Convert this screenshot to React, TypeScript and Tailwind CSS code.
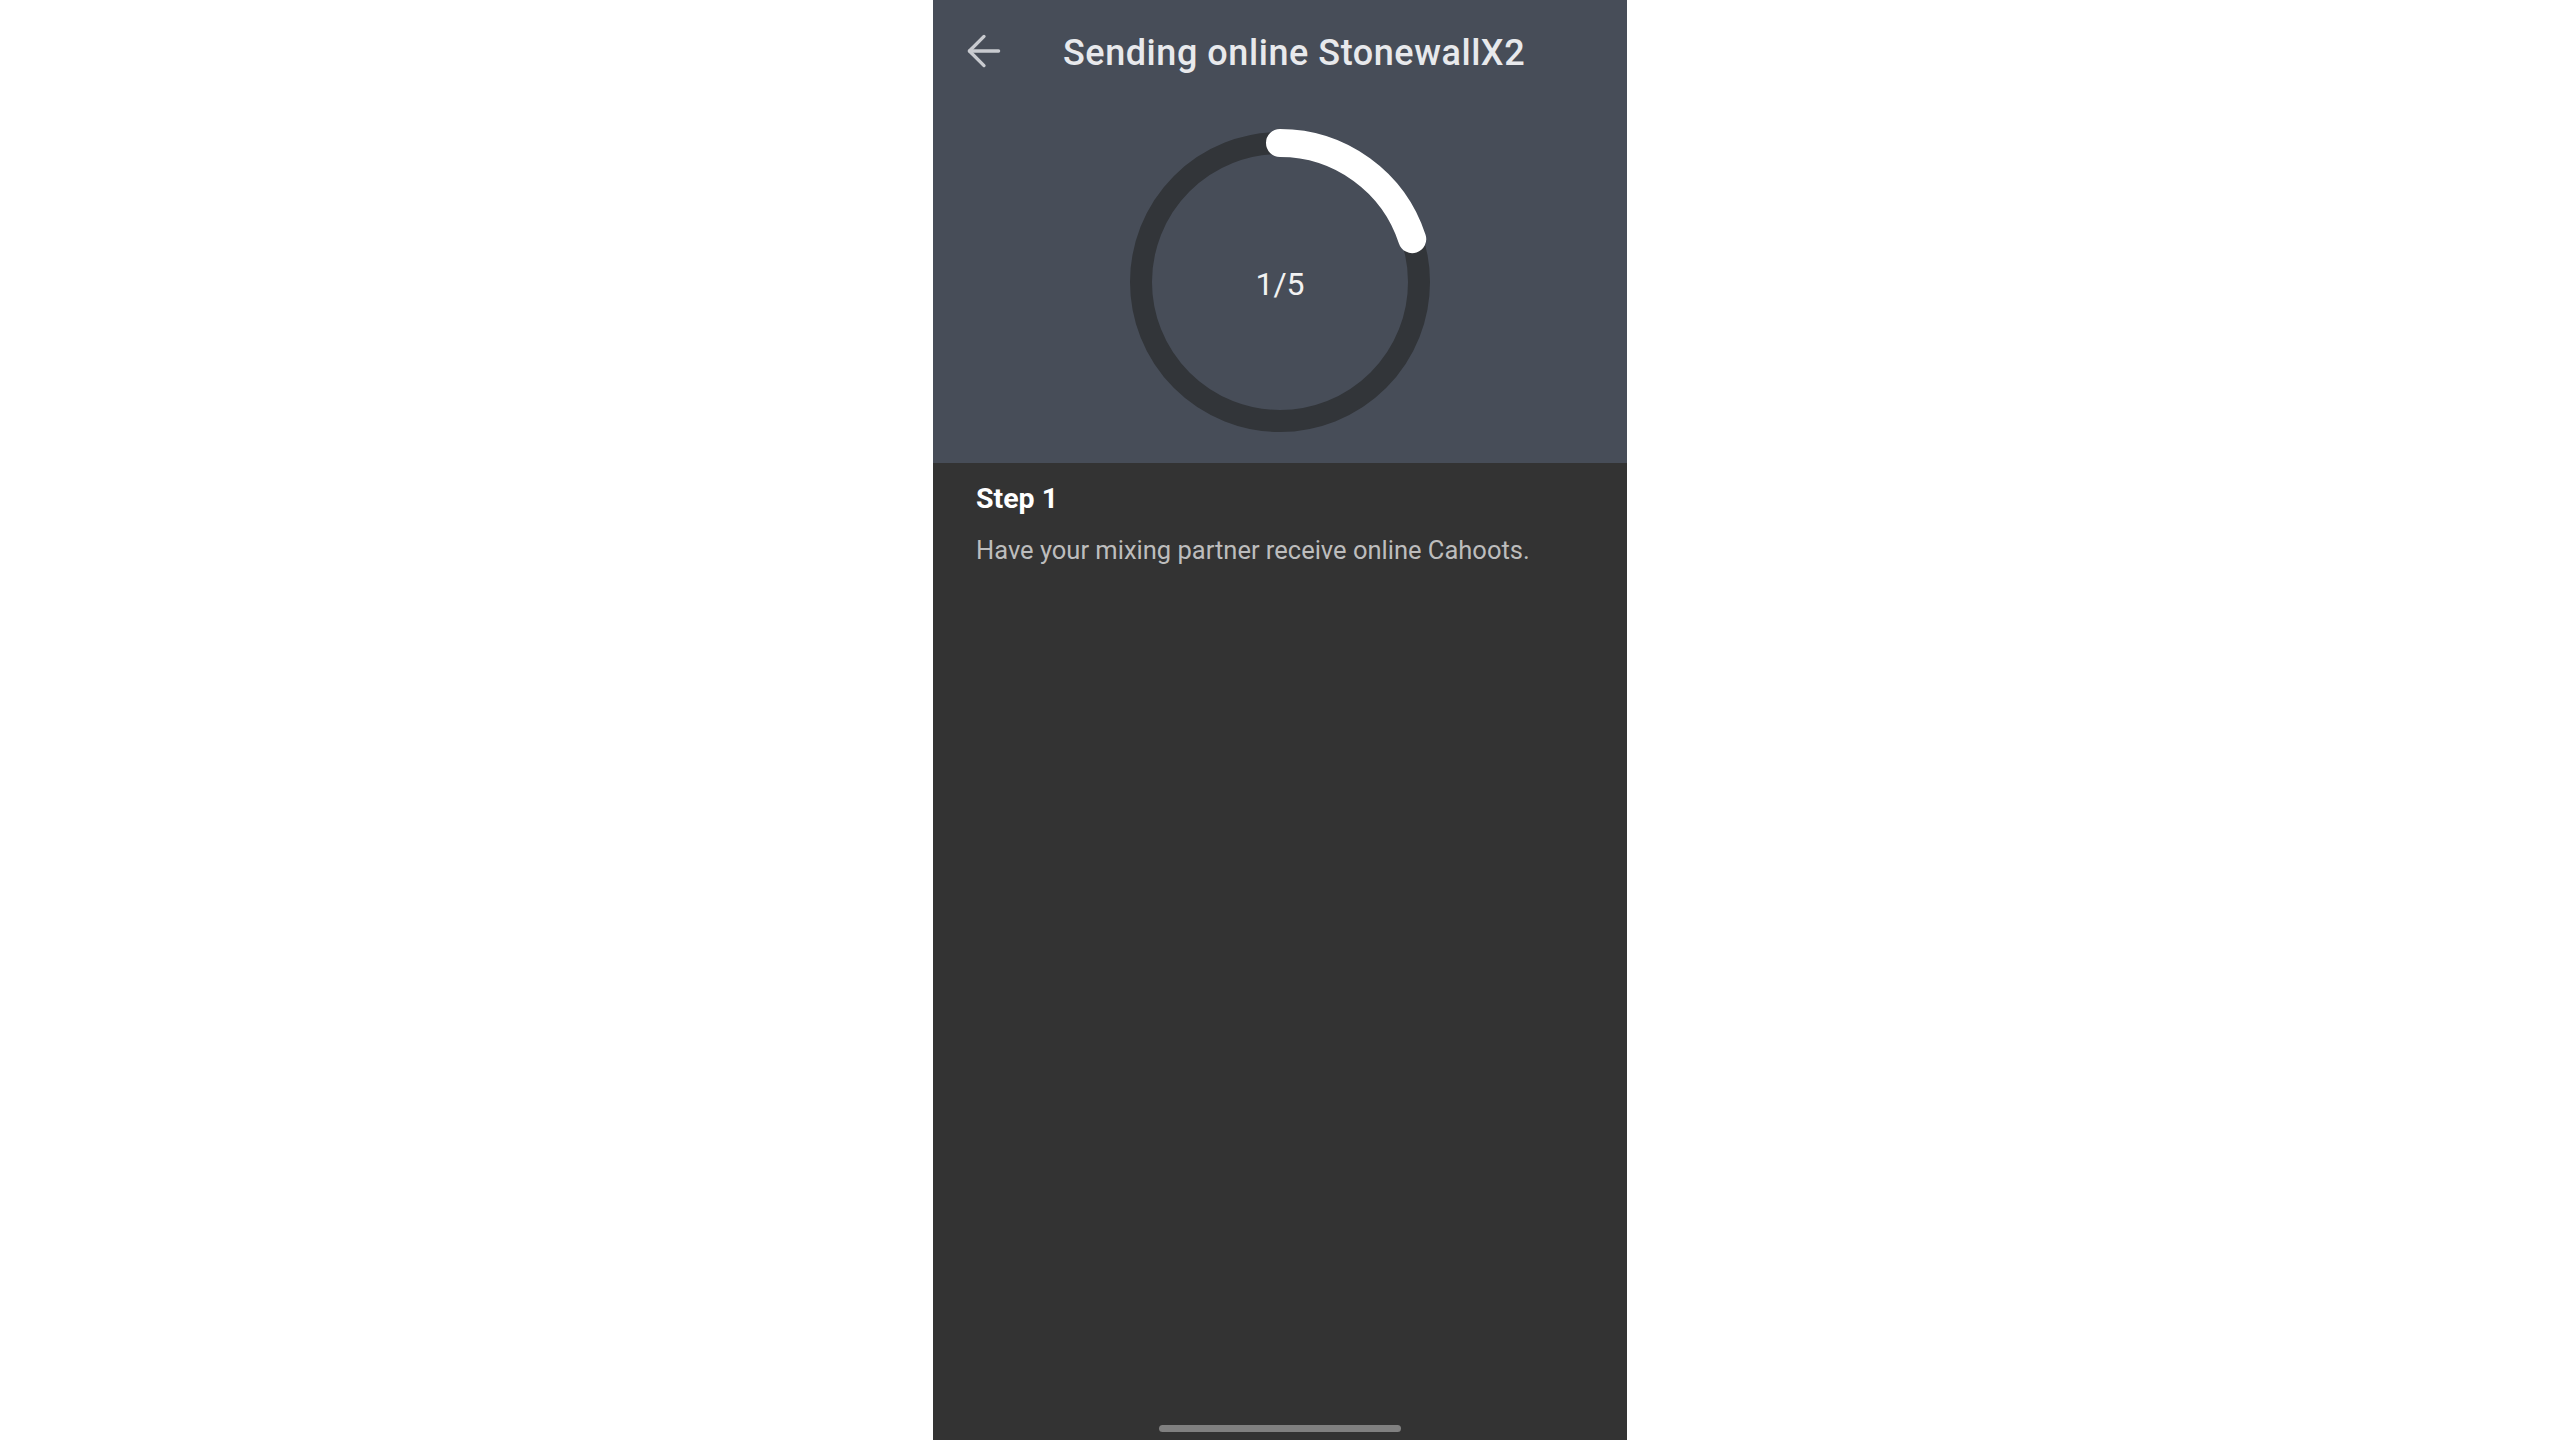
import { ArrowLeft } from "lucide-react";

function ProgressRing({ step, total }: { step: number; total: number }) {
  const r = 139;
  const c = 2 * Math.PI * r;
  const done = c * (step / total);
  return (
    <div className="relative w-[310px] h-[310px]">
      <svg width="310" height="310" viewBox="0 0 310 310" className="-rotate-90">
        <circle cx="155" cy="155" r={r} fill="none" stroke="#323539" strokeWidth="22" />
        <circle
          cx="155"
          cy="155"
          r={r}
          fill="none"
          stroke="#ffffff"
          strokeWidth="28"
          strokeLinecap="round"
          strokeDasharray={`${done} ${c}`}
        />
      </svg>
      <div className="absolute inset-0 flex items-center justify-center pt-[4px] text-[32px] text-[#f2f2f2]">
        {step}/{total}
      </div>
    </div>
  );
}

export default function App() {
  return (
    <div className="h-screen w-full bg-white flex justify-center" style={{ fontFamily: "Roboto, 'Liberation Sans', sans-serif" }}>
      <div className="w-[694px] h-full flex flex-col bg-[#333333]">
        <header className="h-[463px] bg-[#474d58] flex flex-col items-center">
          <div className="w-full h-[102px] flex items-center pl-[26px]">
            <ArrowLeft className="w-[50px] h-[50px] text-[#c9cbd0]" strokeWidth={1.6} />
            <h1 className="ml-[54px] pt-[3px] text-[36px] font-medium text-[#e8e9ec] tracking-[0.55px]">
              Sending online StonewallX2
            </h1>
          </div>
          <div className="mt-[25px]">
            <ProgressRing step={1} total={5} />
          </div>
        </header>
        <section className="flex-1 flex flex-col px-[43px] pt-[18px] relative">
          <p className="text-[28.5px] leading-[36px] font-bold text-white">Step 1</p>
          <p className="mt-[15px] text-[25.5px] leading-[36px] text-[#bdbdbd]">
            Have your mixing partner receive online Cahoots.
          </p>
          <div className="absolute bottom-[8px] left-1/2 -translate-x-1/2 w-[242px] h-[7px] rounded-full bg-[#808080]" />
        </section>
      </div>
    </div>
  );
}
